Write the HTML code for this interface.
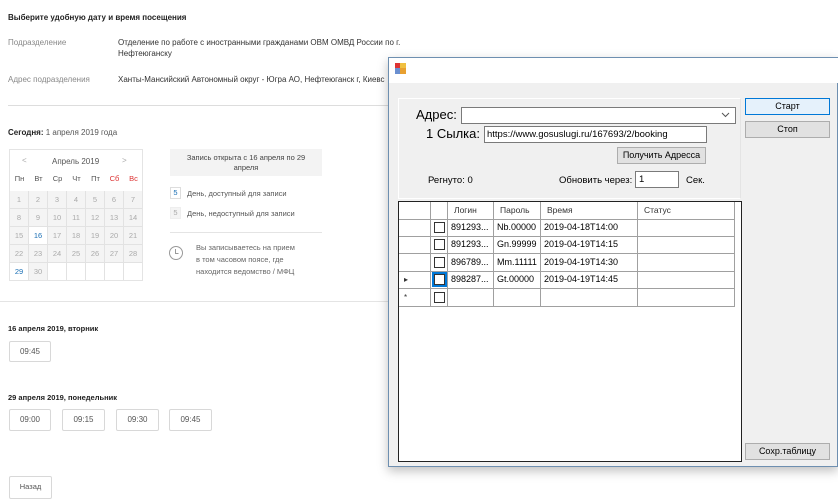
<!DOCTYPE html>
<html><head><meta charset="utf-8"><style>
*{margin:0;padding:0;box-sizing:border-box}
body{width:838px;height:503px;background:#fff;position:relative;overflow:hidden;font-family:"Liberation Sans",Arial,sans-serif;color:#333;font-size:8px}
.a{position:absolute;white-space:nowrap}
.g{color:#888}
.cal{position:absolute;left:9px;top:149px;width:134px;height:132px;border:1px solid #e4e4e4;overflow:hidden}
.cal .c{position:absolute;width:19px;height:18px;line-height:18px;text-align:center;font-size:7.5px;color:#aaa;background:#f4f4f4;border-right:1px solid #e2e2e2;border-bottom:1px solid #e2e2e2}
.wd{position:absolute;top:24px;width:19px;text-align:center;font-size:7.5px;color:#555}
.tb{position:absolute;border:1px solid #d8d8d8;border-radius:2px;text-align:center;line-height:20px;font-size:8px;color:#555}
.w{position:absolute;font-family:"Liberation Sans",Arial,sans-serif;color:#000}
.btn{position:absolute;background:#e1e1e1;border:1px solid #adadad;text-align:center;font-size:9px;color:#000}
.gr{position:absolute;border-right:1px solid #a0a0a0;border-bottom:1px solid #a0a0a0;height:18px;line-height:17px;font-size:9px;padding-left:3px;color:#000;overflow:hidden}
.cb{position:absolute;width:11px;height:11px;border:1px solid #333;background:#fff}
</style></head><body>
<div class="a" style="left:8px;top:13px;font-weight:bold;font-size:8px;color:#222">Выберите удобную дату и время посещения</div>
<div class="a g" style="left:8px;top:38px">Подразделение</div>
<div class="a" style="left:118px;top:38px">Отделение по работе с иностранными гражданами ОВМ ОМВД России по г.</div>
<div class="a" style="left:118px;top:49px">Нефтеюганску</div>
<div class="a g" style="left:8px;top:75px">Адрес подразделения</div>
<div class="a" style="left:118px;top:75px">Ханты-Мансийский Автономный округ - Югра АО, Нефтеюганск г, Киевс</div>
<div class="a" style="left:8px;top:105px;width:380px;height:1px;background:#ddd"></div>
<div class="a" style="left:8px;top:128px;color:#555"><b style="color:#222">Сегодня:</b> 1 апреля 2019 года</div>
<div class="cal">
<div class="a" style="left:12px;top:6px;color:#aaa">&lt;</div>
<div class="a" style="left:42px;top:7px;color:#555">Апрель 2019</div>
<div class="a" style="left:112px;top:6px;color:#aaa">&gt;</div>
<div class="wd" style="left:0">Пн</div><div class="wd" style="left:19px">Вт</div><div class="wd" style="left:38px">Ср</div><div class="wd" style="left:57px">Чт</div><div class="wd" style="left:76px">Пт</div><div class="wd" style="left:95px;color:#d33">Сб</div><div class="wd" style="left:114px;color:#d33">Вс</div>
<div id="cells"></div>
</div>
<div class="a" style="left:170px;top:149px;width:152px;height:27px;background:#f3f3f3;text-align:center;white-space:normal;line-height:10px;padding:4px 12px 0;font-size:7.5px;color:#444">Запись открыта с 16 апреля по 29 апреля</div>
<div class="a" style="left:170px;top:187px;width:11px;height:12px;border:1px solid #ddd;text-align:center;line-height:10px;color:#1a6fb5;font-size:7.5px">5</div>
<div class="a" style="left:187px;top:189px;font-size:7.5px;color:#555">День, доступный для записи</div>
<div class="a" style="left:170px;top:207px;width:11px;height:12px;border:1px solid #eee;background:#f4f4f4;text-align:center;line-height:10px;color:#aaa;font-size:7.5px">5</div>
<div class="a" style="left:187px;top:209px;font-size:7.5px;color:#555">День, недоступный для записи</div>
<div class="a" style="left:170px;top:232px;width:152px;height:1px;background:#e4e4e4"></div>
<svg class="a" style="left:168px;top:245px" width="16" height="16"><circle cx="8" cy="8" r="6.5" fill="none" stroke="#999"/><path d="M7.5 4v4.5h3" fill="none" stroke="#999"/></svg>
<div class="a" style="left:196px;top:242px;font-size:7.5px;color:#666;line-height:12px">Вы записываетесь на прием<br>в том часовом поясе, где<br>находится ведомство / МФЦ</div>
<div class="a" style="left:0;top:301px;width:388px;height:1px;background:#e4e4e4"></div>
<div class="a" style="left:8px;top:324px;font-weight:bold;font-size:7.5px;color:#222">16 апреля 2019, вторник</div>
<div class="tb" style="left:9px;top:341px;width:42px;height:21px">09:45</div>
<div class="a" style="left:8px;top:393px;font-weight:bold;font-size:7.5px;color:#222">29 апреля 2019, понедельник</div>
<div class="tb" style="left:9px;top:409px;width:42px;height:22px">09:00</div>
<div class="tb" style="left:62px;top:409px;width:43px;height:22px">09:15</div>
<div class="tb" style="left:116px;top:409px;width:43px;height:22px">09:30</div>
<div class="tb" style="left:169px;top:409px;width:43px;height:22px">09:45</div>
<div class="tb" style="left:9px;top:476px;width:43px;height:23px;font-size:7.5px">Назад</div>

<div class="a" style="left:388px;top:57px;width:450px;height:410px;border:1px solid #6e8fb0;background:#f0f0f0;box-shadow:0 4px 10px rgba(0,0,0,.25)"></div>
<div class="a" style="left:389px;top:58px;width:449px;height:25px;background:#fff"></div>
<svg class="a" style="left:395px;top:63px" width="12" height="12"><rect x="0" y="0" width="5" height="5" fill="#d33"/><rect x="5" y="0" width="6" height="6" fill="#f0c040"/><rect x="0" y="5" width="5" height="6" fill="#6a8fd0"/><rect x="5" y="5" width="6" height="6" fill="#e8a030"/></svg>
<div class="a" style="left:398px;top:98px;width:343px;height:101px;border:1px solid #fff;border-right-color:#e4e4e4;background:#f0f0f0"></div>
<div class="w" style="left:416px;top:107px;font-size:13px">Адрес:</div>
<div class="a" style="left:461px;top:107px;width:275px;height:17px;background:#fff;border:1px solid #7a7a7a"></div>
<svg class="a" style="left:721px;top:112px" width="9" height="6"><path d="M1 1l3.5 3.5L8 1" fill="none" stroke="#555"/></svg>
<div class="w" style="left:426px;top:126px;font-size:13px">1 Сылка:</div>
<div class="a" style="left:484px;top:126px;width:223px;height:17px;background:#fff;border:1px solid #7a7a7a;font-size:9.5px;color:#000;padding:2px 0 0 2px">https://www.gosuslugi.ru/167693/2/booking</div>
<div class="btn" style="left:617px;top:147px;width:89px;height:17px;line-height:15px">Получить Адресса</div>
<div class="w" style="left:428px;top:175px;font-size:9.5px">Регнуто: 0</div>
<div class="w" style="left:559px;top:175px;font-size:9.5px">Обновить через:</div>
<div class="a" style="left:635px;top:171px;width:44px;height:17px;background:#fff;border:1px solid #7a7a7a;font-size:9.5px;color:#000;padding:2px 0 0 3px">1</div>
<div class="w" style="left:686px;top:175px;font-size:9.5px">Сек.</div>
<div class="btn" style="left:745px;top:98px;width:85px;height:17px;line-height:15px;border:1px solid #0078d7;background:#e5f1fb">Старт</div>
<div class="btn" style="left:745px;top:121px;width:85px;height:17px;line-height:15px">Стоп</div>
<div class="btn" style="left:745px;top:443px;width:85px;height:17px;line-height:15px">Сохр.таблицу</div>
<div class="a" style="left:398px;top:201px;width:344px;height:261px;background:#fff;border:1px solid #222"></div>
<div id="grid"></div>
<script>
var h='';var cols=[[399,32],[431,17],[448,46],[494,47],[541,97],[638,97]];
var rows=[['','','Логин','Пароль','Время','Статус'],['','c','891293...','Nb.00000','2019-04-18T14:00',''],['','c','891293...','Gn.99999','2019-04-19T14:15',''],['','c','896789...','Mm.11111','2019-04-19T14:30',''],['▸','C','898287...','Gt.00000','2019-04-19T14:45',''],['*','c','','','','']];
var ys=[202,219,236,254,271,289];
rows.forEach(function(r,i){cols.forEach(function(c,j){var t=r[j];var st='left:'+c[0]+'px;top:'+ys[i]+'px;width:'+c[1]+'px;'+(i==0?'color:#333;font-size:8.5px;padding-left:6px;':'');
if(j==0){h+='<div class="gr" style="'+st+'font-size:8px;color:#333;padding-left:5px">'+t+'</div>';return;}
if(j==1&&t){h+='<div class="gr" style="'+st+'"></div><div class="cb" style="left:434px;top:'+(ys[i]+3)+'px;'+(t=='C'?'outline:2px solid #0078d7':'')+'"></div>';return;}
h+='<div class="gr" style="'+st+'">'+t+'</div>';});});
document.getElementById('grid').innerHTML=h;
var c='';for(var k=0;k<35;k++){var d=k+1,col=k%7,row=Math.floor(k/7);var s='left:'+(col*19)+'px;top:'+(41+row*18)+'px;';var t=d<=30?d:'';
if(d==16)s+='background:#fff;color:#1a6fb5;';if(d==29)s+='background:#fff;color:#1a6fb5;';if(d>30)s+='background:#fff;';
c+='<div class="c" style="'+s+'">'+t+'</div>';}
document.getElementById('cells').innerHTML=c;
</script>
</body></html>
